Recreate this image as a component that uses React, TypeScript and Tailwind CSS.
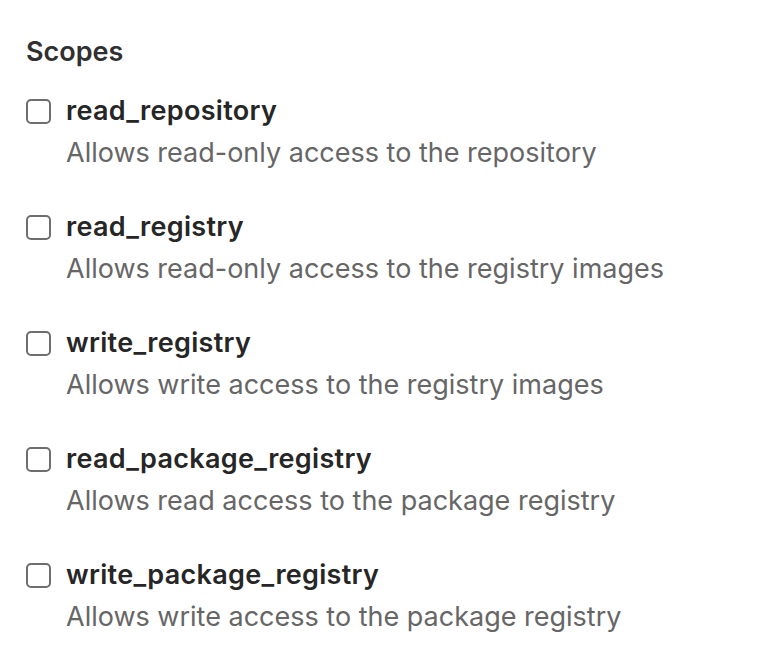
const scopes = [
  { name: "read_repository", desc: "Allows read-only access to the repository" },
  { name: "read_registry", desc: "Allows read-only access to the registry images" },
  { name: "write_registry", desc: "Allows write access to the registry images" },
  { name: "read_package_registry", desc: "Allows read access to the package registry" },
  { name: "write_package_registry", desc: "Allows write access to the package registry" },
];

export default function App() {
  return (
    <div className="min-h-screen bg-white pl-[26px] pt-[36px] font-['Inter',sans-serif]">
      <h2 className="text-[27px] leading-[32px] font-semibold text-[#303030]">Scopes</h2>
      <div className="mt-[22px] flex flex-col gap-[32px]">
        {scopes.map((s) => (
          <label key={s.name} className="flex items-start gap-[15px]">
            <span className="mt-[9px] h-[25px] w-[25px] shrink-0 rounded-[5px] border-2 border-[#6e6e6e] bg-white" />
            <span className="flex flex-col">
              <span className="text-[27px] leading-[42px] tracking-[0.3px] font-semibold text-[#262626]">{s.name}</span>
              <span className="text-[27px] leading-[42px] text-[#666666]">{s.desc}</span>
            </span>
          </label>
        ))}
      </div>
    </div>
  );
}
